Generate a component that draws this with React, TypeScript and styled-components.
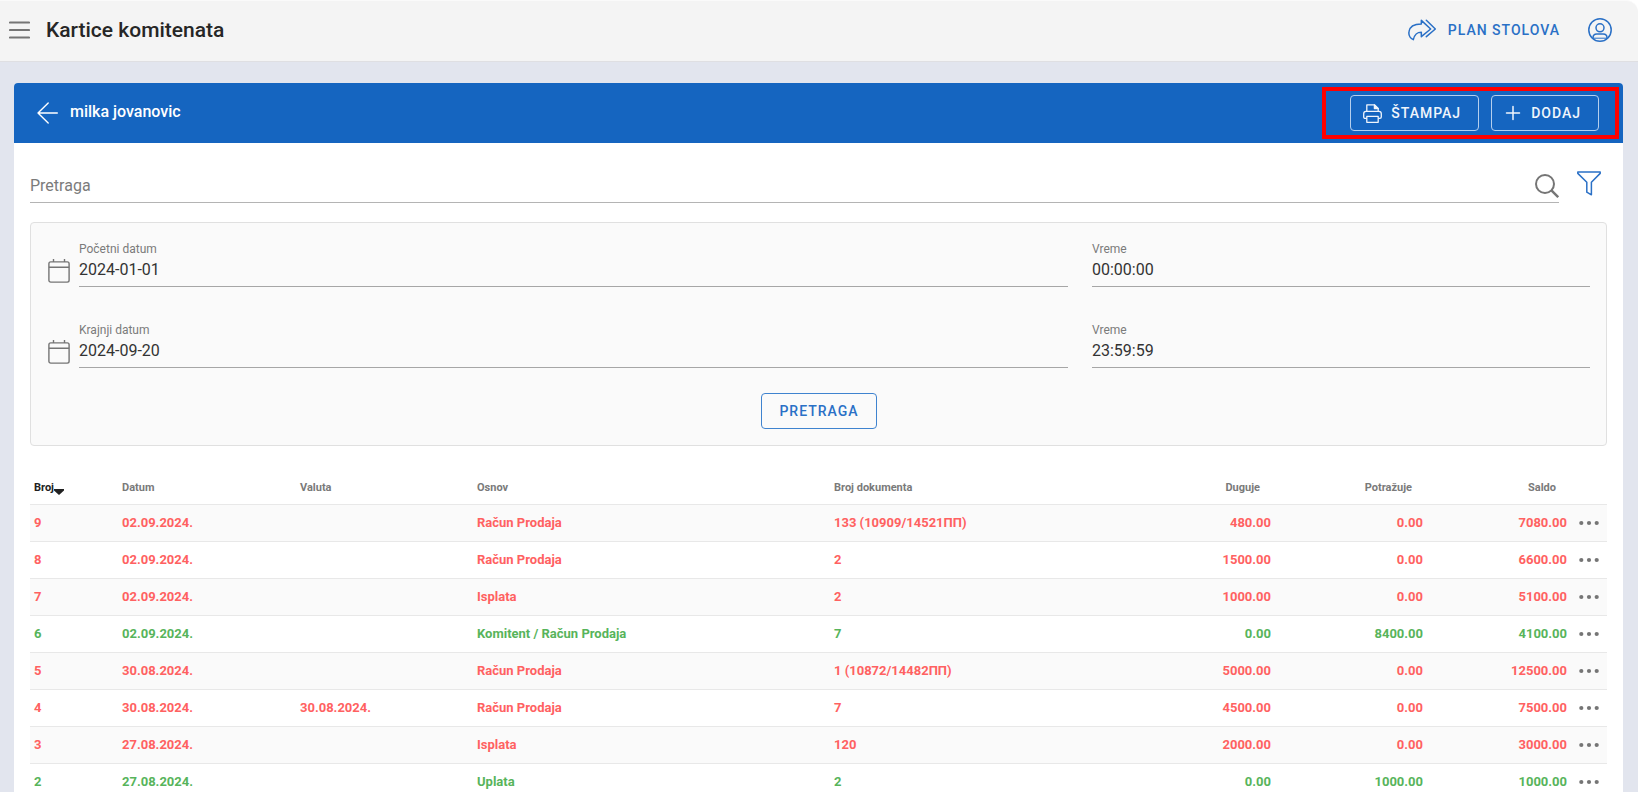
import React from "react";
import styled, { createGlobalStyle } from "styled-components";

const GlobalStyle = createGlobalStyle`
  * { box-sizing: border-box; }
  body {
    margin: 0;
    background: #ffffff;
    color: #262626;
    font-family: Roboto, "Liberation Sans", sans-serif;
    font-size: 16px;
  }
  button, input { font-family: inherit; }
`;

const BLUE = "#1565c0";
const LINK_BLUE = "#2a70c6";

const Shell = styled.div`
  display: flex;
  flex-direction: column;
  height: 100vh;
`;

const AppBar = styled.header`
  display: flex;
  flex: none;
  align-items: center;
  height: 62px;
  padding: 0 26px 2px 9px;
  background: #f4f4f4;
  border-top: 1px solid #fafafa;
  border-bottom: 1px solid #dfdfe2;
  border-top-right-radius: 12px;
`;

const IconButton = styled.button<{ $color?: string }>`
  display: flex;
  flex: none;
  align-items: center;
  padding: 0;
  border: 0;
  background: none;
  color: ${(p) => p.$color ?? "#757575"};
  cursor: pointer;
`;

const PageTitle = styled.h1`
  flex: 1;
  margin: 0 0 0 16px;
  font-size: 21px;
  line-height: 28px;
  font-weight: 500;
`;

const NavLink = styled.a`
  display: flex;
  align-items: center;
  gap: 12px;
  margin-right: 28px;
  color: ${LINK_BLUE};
  font-size: 14px;
  line-height: 20px;
  font-weight: 500;
  letter-spacing: 1px;
  text-decoration: none;
`;

const Main = styled.main`
  flex: 1;
  min-height: 0;
  padding: 21px 15px 0 14px;
  overflow-y: auto;
  scrollbar-width: none;
  background: #e2e5ee;
`;

const Card = styled.section`
  border-radius: 4px;
  background: #ffffff;
`;

const CardBar = styled.div`
  display: flex;
  align-items: center;
  gap: 12px;
  height: 60px;
  padding: 0 4px 0 23px;
  border-radius: 4px 4px 0 0;
  background: ${BLUE};
  color: #ffffff;
`;

const CardTitle = styled.h2`
  flex: 1;
  margin: 0;
  padding-bottom: 2px;
  font-size: 16px;
  line-height: 20px;
  font-weight: 500;
`;

const HighlightedActions = styled.div`
  display: flex;
  gap: 12px;
  padding: 4px 16px 4px 24px;
  border: 4px solid #ff0000;
`;

const OutlinedButton = styled.button<{ $onDark?: boolean }>`
  display: flex;
  align-items: center;
  justify-content: center;
  gap: 9px;
  height: 36px;
  padding: 0 ${(p) => (p.$onDark ? 17 : 17)}px 0 ${(p) => (p.$onDark ? 12 : 17)}px;
  border: 1px solid ${(p) => (p.$onDark ? "#b5cfee" : "#3f83cf")};
  border-radius: 4px;
  background: none;
  color: ${(p) => (p.$onDark ? "#f0f5fc" : LINK_BLUE)};
  font-size: 14px;
  line-height: 20px;
  font-weight: 500;
  letter-spacing: 1px;
  cursor: pointer;
`;

const CardBody = styled.div`
  padding: 20px 16px 24px;
`;

const SearchRow = styled.form`
  display: flex;
  align-items: center;
  gap: 18px;
  padding-right: 6px;
`;

const SearchBox = styled.div`
  display: flex;
  flex: 1;
  align-items: center;
  height: 40px;
  padding-top: 6px;
  border-bottom: 1px solid #b4b4b4;
`;

const SearchInput = styled.input`
  flex: 1;
  min-width: 0;
  height: 32px;
  padding: 0;
  border: 0;
  outline: 0;
  background: none;
  color: #212121;
  font-size: 16px;
  &::placeholder { color: #7b7b7b; opacity: 1; }
`;

const FilterPanel = styled.form`
  margin-top: 19px;
  padding: 18px 4px 16px 5px;
  border: 1px solid #e0e0e0;
  border-radius: 4px;
  background: #fafafa;
`;

const FilterGrid = styled.div`
  display: grid;
  grid-template-columns: 2fr 1fr;
  row-gap: 35px;
`;

const FieldCell = styled.div`
  display: flex;
  align-items: flex-end;
  gap: 9px;
  padding: 0 12px;
  color: #757575;
`;

const FieldIcon = styled.span`
  display: flex;
  padding-bottom: 4px;
`;

const Field = styled.div`
  display: flex;
  flex: 1;
  flex-direction: column;
`;

const FieldLabel = styled.label`
  color: #7b7b7b;
  font-size: 12px;
  line-height: 16px;
`;

const FieldInput = styled.input`
  width: 100%;
  height: 30px;
  padding: 0 0 5px;
  border: 0;
  border-bottom: 1px solid #a6a6a6;
  outline: 0;
  background: none;
  color: #333333;
  font-size: 16px;
`;

const FilterSubmit = styled.div`
  display: flex;
  justify-content: center;
  margin-top: 25px;
`;

const Ledger = styled.table`
  width: 100%;
  margin-top: 25px;
  border-spacing: 0;
  table-layout: fixed;
`;

const Col = styled.col<{ $width?: number }>`
  width: ${(p) => (p.$width ? `${p.$width}px` : "auto")};
`;

const HeadCell = styled.th<{ $numeric?: boolean; $active?: boolean }>`
  height: 34px;
  padding: 0 ${(p) => (p.$numeric ? 15 : 4)}px 0 4px;
  border-bottom: 1px solid #e8e8e8;
  color: ${(p) => (p.$active ? "#212121" : "#7a7a7a")};
  font-size: 11px;
  line-height: 16px;
  font-weight: 700;
  text-align: ${(p) => (p.$numeric ? "right" : "left")};
  white-space: nowrap;
  svg { vertical-align: -4px; }
`;

const EntryRow = styled.tr<{ $credit: boolean }>`
  color: ${(p) => (p.$credit ? "#57b45b" : "#ff6161")};
  &:nth-child(odd) { background: #fafafa; }
`;

const Cell = styled.td<{ $numeric?: boolean }>`
  height: 37px;
  padding: 0 4px;
  border-bottom: 1px solid #e8e8e8;
  font-size: 13px;
  line-height: 16px;
  font-weight: 700;
  text-align: ${(p) => (p.$numeric ? "right" : "left")};
  white-space: nowrap;
`;

const ActionCell = styled(Cell)`
  padding: 0 8px;
`;

const MenuIcon = () => (
  <svg width="21" height="20" viewBox="0 0 21 20" fill="none" stroke="currentColor" strokeWidth="2.2" strokeLinecap="round" aria-hidden="true">
    <path d="M1 2.5H20M1 10H20M1 17.5H20" />
  </svg>
);

const RedoIcon = () => (
  <svg width="28" height="22" viewBox="0 0 84 66" fill="none" stroke="currentColor" strokeWidth="4.5" strokeLinejoin="round" strokeLinecap="round" aria-hidden="true">
    <path d="M16 62C8 58 1 50 3 38C5 23 18 15 40 15V4L68 30L40 53V40C26 40 20 46 16 62Z" />
    <path d="M55 4L82 30L55 53" />
  </svg>
);

const AccountIcon = () => (
  <svg width="24" height="24" viewBox="0 0 24 24" fill="none" stroke="currentColor" strokeWidth="1.5" aria-hidden="true">
    <circle cx="12" cy="12" r="11.2" />
    <circle cx="12" cy="9.8" r="4" />
    <path d="M5 20.5V19.8C5 17.4 6.6 16 8.8 16H15.2C17.4 16 19 17.4 19 19.8V20.5" />
    <path d="M5 20.2H19" strokeWidth="1" />
  </svg>
);

const BackIcon = () => (
  <svg width="21" height="22" viewBox="0 0 21 22" fill="none" stroke="currentColor" strokeWidth="1.4" strokeLinecap="round" strokeLinejoin="round" aria-hidden="true">
    <path d="M20.3 11H1M11.2 1L1 11L11.2 21" />
  </svg>
);

const PrinterIcon = () => (
  <svg width="19" height="19" viewBox="0 0 19 19" fill="none" stroke="currentColor" strokeWidth="1.3" strokeLinejoin="round" aria-hidden="true">
    <path d="M3.8 7.4V.9H11.6L15.2 4.4V7.4" />
    <path d="M11.4 1V4.6H15.2Z" fill="currentColor" />
    <path d="M3.8 14.4H2.2C1.2 14.4.7 13.9.7 13V9.8C.7 8.2 1.6 7.4 3 7.4H16C17.4 7.4 18.3 8.2 18.3 9.8V13C18.3 13.9 17.8 14.4 16.8 14.4H15.2" />
    <path d="M3.8 12.4H15.2V18.3H3.8Z" />
  </svg>
);

const PlusIcon = () => (
  <svg width="18" height="18" viewBox="0 0 18 18" stroke="currentColor" strokeWidth="1.5" strokeLinecap="round" aria-hidden="true">
    <path d="M9 2.5V15.5M2.5 9H15.5" />
  </svg>
);

const SearchIcon = () => (
  <svg width="24" height="24" viewBox="0 0 24 24" fill="none" stroke="currentColor" strokeWidth="2" aria-hidden="true">
    <circle cx="10" cy="10" r="9" />
    <path d="M16.2 16.2L23.2 23.2" strokeWidth="2.4" />
  </svg>
);

const FilterIcon = () => (
  <svg width="24" height="25" viewBox="0 0 24 25" fill="none" stroke="currentColor" strokeWidth="1.5" strokeLinejoin="round" aria-hidden="true">
    <path d="M.8 1H23.2V2.4L14.4 11.2V23.8L9.8 21.2V11.2L.8 2.4Z" />
  </svg>
);

const CalendarIcon = () => (
  <svg width="22" height="24" viewBox="0 0 22 24" fill="none" stroke="currentColor" strokeWidth="1.4" aria-hidden="true">
    <rect x=".9" y="2.9" width="20.2" height="20.2" rx="1.8" />
    <path d="M.9 8.3H21.1M5.5 0V3M16.5 0V3" />
  </svg>
);

const SortIcon = () => (
  <svg width="10" height="6" viewBox="0 0 10 6" fill="currentColor" aria-hidden="true">
    <path d="M0 0H10V1.4L5 6L0 1.4Z" />
  </svg>
);

const DotsIcon = () => (
  <svg width="20" height="6" viewBox="0 0 20 6" fill="currentColor" aria-hidden="true">
    <circle cx="2.3" cy="3" r="2.1" />
    <circle cx="10" cy="3" r="2.1" />
    <circle cx="17.7" cy="3" r="2.1" />
  </svg>
);

interface Entry {
  no: number;
  date: string;
  due?: string;
  basis: string;
  doc: string;
  debit: string;
  credit: string;
  balance: string;
}

const entries: Entry[] = [
  { no: 9, date: "02.09.2024.", basis: "Račun Prodaja", doc: "133 (10909/14521ПП)", debit: "480.00", credit: "0.00", balance: "7080.00" },
  { no: 8, date: "02.09.2024.", basis: "Račun Prodaja", doc: "2", debit: "1500.00", credit: "0.00", balance: "6600.00" },
  { no: 7, date: "02.09.2024.", basis: "Isplata", doc: "2", debit: "1000.00", credit: "0.00", balance: "5100.00" },
  { no: 6, date: "02.09.2024.", basis: "Komitent / Račun Prodaja", doc: "7", debit: "0.00", credit: "8400.00", balance: "4100.00" },
  { no: 5, date: "30.08.2024.", basis: "Račun Prodaja", doc: "1 (10872/14482ПП)", debit: "5000.00", credit: "0.00", balance: "12500.00" },
  { no: 4, date: "30.08.2024.", due: "30.08.2024.", basis: "Račun Prodaja", doc: "7", debit: "4500.00", credit: "0.00", balance: "7500.00" },
  { no: 3, date: "27.08.2024.", basis: "Isplata", doc: "120", debit: "2000.00", credit: "0.00", balance: "3000.00" },
  { no: 2, date: "27.08.2024.", basis: "Uplata", doc: "2", debit: "0.00", credit: "1000.00", balance: "1000.00" },
];

const filters = [
  { id: "start", label: "Početni datum", date: "2024-01-01", time: "00:00:00" },
  { id: "end", label: "Krajnji datum", date: "2024-09-20", time: "23:59:59" },
];

const hold = (e: React.FormEvent) => e.preventDefault();

export default function App() {
  return (
    <Shell>
      <GlobalStyle />
      <AppBar>
        <IconButton aria-label="Meni"><MenuIcon /></IconButton>
        <PageTitle>Kartice komitenata</PageTitle>
        <NavLink href="#stolovi"><RedoIcon />PLAN STOLOVA</NavLink>
        <IconButton $color={LINK_BLUE} aria-label="Nalog"><AccountIcon /></IconButton>
      </AppBar>
      <Main>
        <Card>
          <CardBar>
            <IconButton $color="#ffffff" aria-label="Nazad"><BackIcon /></IconButton>
            <CardTitle>milka jovanovic</CardTitle>
            <HighlightedActions>
              <OutlinedButton $onDark><PrinterIcon />ŠTAMPAJ</OutlinedButton>
              <OutlinedButton $onDark><PlusIcon />DODAJ</OutlinedButton>
            </HighlightedActions>
          </CardBar>
          <CardBody>
            <SearchRow onSubmit={hold}>
              <SearchBox>
                <SearchInput type="text" placeholder="Pretraga" aria-label="Pretraga" />
                <IconButton aria-label="Traži"><SearchIcon /></IconButton>
              </SearchBox>
              <IconButton type="button" $color={LINK_BLUE} aria-label="Filter"><FilterIcon /></IconButton>
            </SearchRow>
            <FilterPanel onSubmit={hold}>
              <FilterGrid>
                {filters.map((f) => (
                  <React.Fragment key={f.id}>
                    <FieldCell>
                      <FieldIcon><CalendarIcon /></FieldIcon>
                      <Field>
                        <FieldLabel htmlFor={`${f.id}-date`}>{f.label}</FieldLabel>
                        <FieldInput id={`${f.id}-date`} type="text" defaultValue={f.date} />
                      </Field>
                    </FieldCell>
                    <FieldCell>
                      <Field>
                        <FieldLabel htmlFor={`${f.id}-time`}>Vreme</FieldLabel>
                        <FieldInput id={`${f.id}-time`} type="text" defaultValue={f.time} />
                      </Field>
                    </FieldCell>
                  </React.Fragment>
                ))}
              </FilterGrid>
              <FilterSubmit>
                <OutlinedButton type="submit">PRETRAGA</OutlinedButton>
              </FilterSubmit>
            </FilterPanel>
            <Ledger>
              <colgroup>
                <Col $width={88} />
                <Col $width={178} />
                <Col $width={177} />
                <Col $width={357} />
                <Col />
                <Col $width={152} />
                <Col $width={152} />
                <Col $width={144} />
                <Col $width={36} />
              </colgroup>
              <thead>
                <tr>
                  <HeadCell scope="col" $active>Broj<SortIcon /></HeadCell>
                  <HeadCell scope="col">Datum</HeadCell>
                  <HeadCell scope="col">Valuta</HeadCell>
                  <HeadCell scope="col">Osnov</HeadCell>
                  <HeadCell scope="col">Broj dokumenta</HeadCell>
                  <HeadCell scope="col" $numeric>Duguje</HeadCell>
                  <HeadCell scope="col" $numeric>Potražuje</HeadCell>
                  <HeadCell scope="col" $numeric>Saldo</HeadCell>
                  <HeadCell scope="col" aria-label="Akcije" />
                </tr>
              </thead>
              <tbody>
                {entries.map((e) => (
                  <EntryRow key={e.no} $credit={Number(e.credit) > 0}>
                    <Cell>{e.no}</Cell>
                    <Cell>{e.date}</Cell>
                    <Cell>{e.due}</Cell>
                    <Cell>{e.basis}</Cell>
                    <Cell>{e.doc}</Cell>
                    <Cell $numeric>{e.debit}</Cell>
                    <Cell $numeric>{e.credit}</Cell>
                    <Cell $numeric>{e.balance}</Cell>
                    <ActionCell>
                      <IconButton aria-label={`Opcije za stavku ${e.no}`}><DotsIcon /></IconButton>
                    </ActionCell>
                  </EntryRow>
                ))}
              </tbody>
            </Ledger>
          </CardBody>
        </Card>
      </Main>
    </Shell>
  );
}
